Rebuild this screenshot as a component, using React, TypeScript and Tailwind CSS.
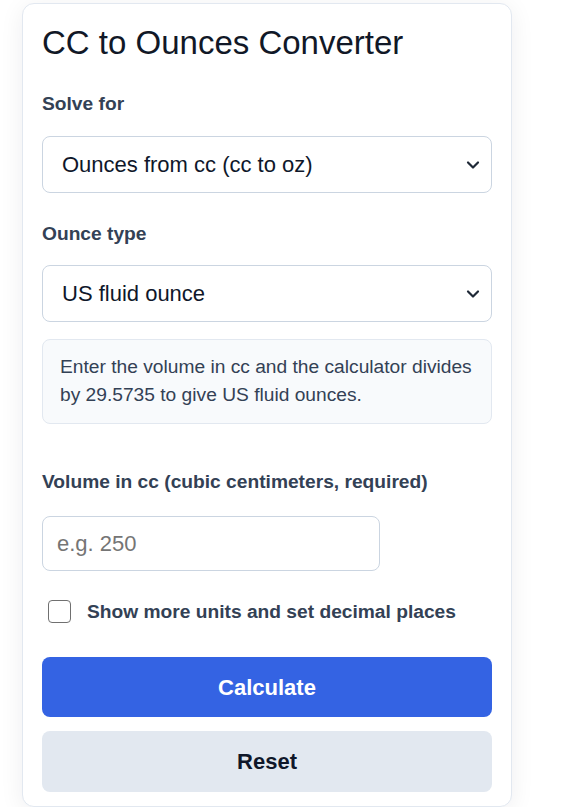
import React from "react";

function Chevron() {
  return (
    <svg
      className="pointer-events-none absolute right-[12px] top-1/2 -translate-y-1/2"
      width="14"
      height="9"
      viewBox="0 0 14 9"
      fill="none"
    >
      <path d="M2 2 L7 7 L12 2" stroke="#1f2937" strokeWidth="2.2" strokeLinecap="round" strokeLinejoin="round" />
    </svg>
  );
}

function Select({ value, options }: { value: string; options: string[] }) {
  return (
    <div className="relative">
      <select
        defaultValue={value}
        className="block w-full h-[57px] appearance-none rounded-[8px] border border-[#cbd5e1] bg-white pl-[19px] pr-[40px] text-[22px] text-[#0f172a] outline-none"
      >
        {options.map((o) => (
          <option key={o}>{o}</option>
        ))}
      </select>
      <Chevron />
    </div>
  );
}

export default function App() {
  return (
    <div
      className="min-h-[807px] bg-white pt-[3px] pl-[22px]"
      style={{ fontFamily: '"Liberation Sans", Arial, sans-serif' }}
    >
      <div className="w-[490px] rounded-[12px] border border-[#e2e8f0] bg-white px-[19px] pt-[19px] pb-[14px] shadow-[0_4px_24px_rgba(15,23,42,0.07)]">
        <h1 className="text-[33px] leading-[40px] font-normal text-[#111827]">CC to Ounces Converter</h1>

        <label className="mt-[29px] block text-[19.2px] leading-[24px] font-bold text-[#334155]">Solve for</label>
        <div className="mt-[20px]">
          <Select
            value="Ounces from cc (cc to oz)"
            options={["Ounces from cc (cc to oz)", "CC from ounces (oz to cc)"]}
          />
        </div>

        <label className="mt-[29px] block text-[19.2px] leading-[24px] font-bold text-[#334155]">Ounce type</label>
        <div className="mt-[19px]">
          <Select value="US fluid ounce" options={["US fluid ounce", "Imperial fluid ounce"]} />
        </div>

        <div className="mt-[17px] rounded-[8px] border border-[#e2e8f0] bg-[#f8fafc] pl-[17px] pr-[14px] pt-[13px] pb-[14px] text-[19.2px] leading-[28px] text-[#334155]">
          Enter the volume in cc and the calculator divides by 29.5735 to give US fluid ounces.
        </div>

        <label className="mt-[46px] block text-[19.2px] leading-[24px] font-bold text-[#334155]">
          Volume in cc (cubic centimeters, required)
        </label>
        <input
          type="text"
          placeholder="e.g. 250"
          className="mt-[22px] block h-[55px] w-[338px] rounded-[8px] border border-[#cbd5e1] bg-white px-[14px] text-[22px] text-[#0f172a] outline-none placeholder:text-[#757575]"
        />

        <label className="mt-[29px] flex h-[23px] items-center gap-[16px] pl-[6px]">
          <input
            type="checkbox"
            className="h-[23px] w-[23px] shrink-0 appearance-none rounded-[4px] border-[1.5px] border-[#707070] bg-white"
          />
          <span className="text-[19.2px] leading-[24px] font-bold text-[#334155]">
            Show more units and set decimal places
          </span>
        </label>

        <button className="mt-[34px] block h-[60px] w-full rounded-[8px] bg-[#3463e3] text-[22px] font-bold text-white">
          Calculate
        </button>
        <button className="mt-[14px] block h-[61px] w-full rounded-[8px] bg-[#e2e8f0] text-[22px] font-bold text-[#0f172a]">
          Reset
        </button>
      </div>
    </div>
  );
}
